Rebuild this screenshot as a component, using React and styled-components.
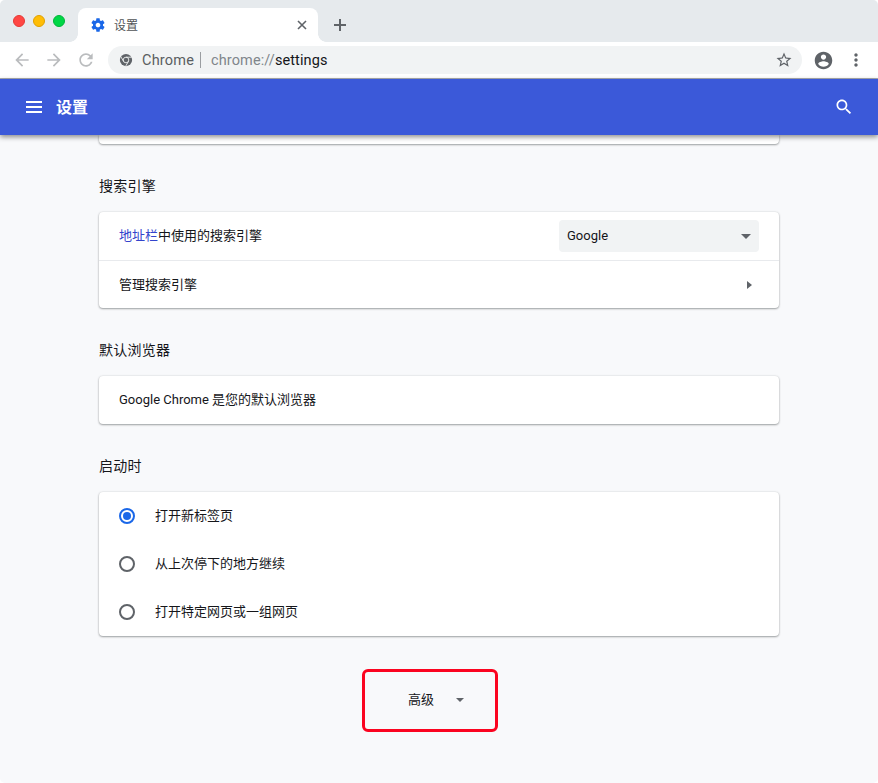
import React, { useState } from 'react';
import styled, { createGlobalStyle, css } from 'styled-components';

const GlobalStyle = createGlobalStyle`
  * {
    box-sizing: border-box;
  }
  body {
    margin: 0;
    background: #fff;
    font-family: Roboto, 'Noto Sans CJK SC', sans-serif;
    font-size: 13px;
    color: #15161a;
  }
`;

const Window = styled.div`
  display: flex;
  flex-direction: column;
  height: 783px;
  overflow: hidden;
  background: #f8f9fb;
  border-radius: 5px;
`;

const TabStrip = styled.div`
  display: flex;
  flex: none;
  height: 42px;
  background: #e6eaed;
`;

const TrafficLights = styled.div`
  display: flex;
  gap: 8px;
  width: 78px;
  padding: 15px 0 0 13px;
`;

const Light = styled.span`
  width: 12px;
  height: 12px;
  border-radius: 50%;
  background: ${(props) => props.$color};
  border: 1px solid ${(props) => props.$edge};
`;

const Tab = styled.div`
  position: relative;
  display: flex;
  align-items: center;
  width: 240px;
  margin-top: 8px;
  padding: 0 8px 0 12px;
  background: #fff;
  border-radius: 8px 8px 0 0;

  &::before,
  &::after {
    content: '';
    position: absolute;
    bottom: 0;
    width: 8px;
    height: 8px;
  }
  &::before {
    left: -8px;
    background: radial-gradient(circle at 0 0, transparent 7.5px, #fff 8px);
  }
  &::after {
    right: -8px;
    background: radial-gradient(circle at 100% 0, transparent 7.5px, #fff 8px);
  }
`;

const TabTitle = styled.span`
  flex: 1;
  margin-left: 8px;
  padding-top: 1px;
  font-size: 12px;
  line-height: 16px;
  color: #505356;
`;

const NewTab = styled.div`
  display: flex;
  align-items: center;
  margin: 8px 0 0 12px;
`;

const Toolbar = styled.div`
  display: flex;
  flex: none;
  align-items: center;
  height: 37px;
  padding-left: 12px;
  background: #fff;
  border-bottom: 1px solid #a9abb0;
`;

const NavButtons = styled.div`
  display: flex;
  gap: 12px;
  width: 96px;
`;

const Omnibox = styled.div`
  display: flex;
  flex: none;
  align-items: center;
  width: 694px;
  height: 28px;
  padding: 0 9px 0 11px;
  border-radius: 14px;
  background: #f1f3f4;
  font-size: 14.5px;
  line-height: 20px;
`;

const SiteName = styled.span`
  margin-left: 9px;
  padding: 1px 6px 0 0;
  color: #5a5e62;
  letter-spacing: 0.2px;
`;

const Divider = styled.span`
  width: 1px;
  height: 16px;
  background: #9a9da1;
`;

const Url = styled.span`
  flex: 1;
  margin-left: 10px;
  padding-top: 1px;
  color: #15161a;
  letter-spacing: 0.1px;
`;

const Scheme = styled.span`
  color: #80868b;
`;

const ToolbarActions = styled.div`
  display: flex;
  align-items: center;
  gap: 12px;
  margin-left: 11px;
`;

const Header = styled.header`
  position: relative;
  z-index: 1;
  display: flex;
  flex: none;
  align-items: center;
  height: 56px;
  padding: 0 24px 0 22px;
  background: #3b59d9;
  color: #fff;
  box-shadow: 0 2px 5px rgba(0, 0, 0, 0.45);
`;

const HeaderTitle = styled.h1`
  flex: 1;
  margin: 0 0 0 10px;
  padding-top: 1px;
  font-size: 16px;
  font-weight: 700;
  line-height: 24px;
`;

const Main = styled.main`
  width: 680px;
  margin: 0 auto;
`;

const Card = styled.div`
  background: #fff;
  border-radius: 4px;
  box-shadow: 0 1px 2px rgba(60, 64, 67, 0.45), 0 0 2px rgba(60, 64, 67, 0.18);
`;

const PreviousCard = styled(Card)`
  height: 9px;
  border-radius: 0 0 4px 4px;
`;

const SectionTitle = styled.h2`
  height: 68px;
  margin: 0;
  padding-top: 32px;
  font-size: 14px;
  font-weight: 400;
  line-height: 21px;
  letter-spacing: 0.25px;
`;

const Row = styled.div`
  display: flex;
  align-items: center;
  height: 48px;
  padding: 0 20px;

  ${(props) =>
    props.$divided &&
    css`
      border-top: 1px solid #e8eaed;
    `}
`;

const Label = styled.span`
  flex: 1;
  line-height: 20px;
`;

const Link = styled.span`
  color: #3344cc;
`;

const Select = styled.div`
  display: flex;
  align-items: center;
  justify-content: space-between;
  width: 200px;
  height: 32px;
  padding: 0 8px;
  border-radius: 4px;
  background: #f1f3f4;
`;

const SelectValue = styled.span`
  padding-bottom: 2px;
`;

const Triangle = styled.span`
  border: solid transparent;
  ${(props) =>
    props.$right
      ? css`
          margin-right: 7px;
          border-width: 4.5px 0 4.5px 5px;
          border-left-color: #5f6368;
        `
      : css`
          border-width: ${props.$size}px ${props.$size}px 0;
          border-top-color: #5f6368;
        `}
`;

const Radio = styled.span`
  display: flex;
  align-items: center;
  justify-content: center;
  width: 16px;
  height: 16px;
  margin-right: 20px;
  border: 2px solid ${(props) => (props.$checked ? '#1a67e8' : '#5f6368')};
  border-radius: 50%;

  &::after {
    content: '';
    width: 8px;
    height: 8px;
    border-radius: 50%;
    background: ${(props) => (props.$checked ? '#1a67e8' : 'transparent')};
  }
`;

const Advanced = styled.div`
  display: flex;
  align-items: center;
  gap: 22px;
  width: 136px;
  height: 63px;
  margin: 33px 0 0 263px;
  padding: 0 0 1px 43px;
  border: 3px solid #fb0420;
  border-radius: 6px;
  line-height: 20px;
`;

const ICONS = {
  settings:
    'M19.43 12.98c.04-.32.07-.64.07-.98s-.03-.66-.07-.98l2.11-1.65c.19-.15.24-.42.12-.64l-2-3.46c-.12-.22-.39-.3-.61-.22l-2.49 1c-.52-.4-1.08-.73-1.69-.98l-.38-2.65C14.46 2.18 14.25 2 14 2h-4c-.25 0-.46.18-.49.42l-.38 2.65c-.61.25-1.17.59-1.69.98l-2.49-1c-.23-.09-.49 0-.61.22l-2 3.46c-.13.22-.07.49.12.64l2.11 1.65c-.04.32-.07.65-.07.98s.03.66.07.98l-2.11 1.65c-.19.15-.24.42-.12.64l2 3.46c.12.22.39.3.61.22l2.49-1c.52.4 1.08.73 1.69.98l.38 2.65c.03.24.24.42.49.42h4c.25 0 .46-.18.49-.42l.38-2.65c.61-.25 1.17-.59 1.69-.98l2.49 1c.23.09.49 0 .61-.22l2-3.46c.12-.22.07-.49-.12-.64l-2.11-1.65zM12 15.5c-1.93 0-3.5-1.57-3.5-3.5s1.57-3.5 3.5-3.5 3.5 1.57 3.5 3.5-1.57 3.5-3.5 3.5z',
  back: 'M20 11H7.83l5.59-5.59L12 4l-8 8 8 8 1.41-1.41L7.83 13H20v-2z',
  forward: 'M12 4l-1.41 1.41L16.17 11H4v2h12.17l-5.58 5.59L12 20l8-8z',
  reload:
    'M17.65 6.35C16.2 4.9 14.21 4 12 4c-4.42 0-7.99 3.58-7.99 8s3.57 8 7.99 8c3.73 0 6.84-2.55 7.73-6h-2.08c-.82 2.33-3.04 4-5.65 4-3.31 0-6-2.69-6-6s2.69-6 6-6c1.66 0 3.14.69 4.22 1.78L13 11h7V4l-2.35 2.35z',
  star:
    'M22 9.24l-7.19-.62L12 2 9.19 8.63 2 9.24l5.46 4.73L5.82 21 12 17.27 18.18 21l-1.63-7.03L22 9.24zM12 15.4l-3.76 2.27 1-4.28-3.32-2.88 4.38-.38L12 6.1l1.71 4.04 4.38.38-3.32 2.88 1 4.28L12 15.4z',
  account:
    'M12 2C6.48 2 2 6.48 2 12s4.48 10 10 10 10-4.48 10-10S17.52 2 12 2zm0 3c1.66 0 3 1.34 3 3s-1.34 3-3 3-3-1.34-3-3 1.34-3 3-3zm0 14.2c-2.5 0-4.71-1.28-6-3.22.03-1.99 4-3.08 6-3.08 1.99 0 5.97 1.09 6 3.08-1.29 1.94-3.5 3.22-6 3.22z',
  more:
    'M12 8c1.1 0 2-.9 2-2s-.9-2-2-2-2 .9-2 2 .9 2 2 2zm0 2c-1.1 0-2 .9-2 2s.9 2 2 2 2-.9 2-2-.9-2-2-2zm0 6c-1.1 0-2 .9-2 2s.9 2 2 2 2-.9 2-2-.9-2-2-2z',
  menu: 'M4 18h16v-2H4v2zm0-5h16v-2H4v2zm0-7v2h16V6H4z',
  search:
    'M15.5 14h-.79l-.28-.27C15.41 12.59 16 11.11 16 9.5 16 5.91 13.09 3 9.5 3S3 5.91 3 9.5 5.91 16 9.5 16c1.61 0 3.09-.59 4.23-1.57l.27.28v.79l5 4.99L20.49 19l-4.99-5zm-6 0C7.01 14 5 11.99 5 9.5S7.01 5 9.5 5 14 7.01 14 9.5 11.99 14 9.5 14z',
};

const Icon = ({ name, size, color = '#5f6368' }) => (
  <svg width={size} height={size} viewBox="0 0 24 24" fill={color}>
    <path d={ICONS[name]} />
  </svg>
);

const CloseIcon = () => (
  <svg width="16" height="16" fill="none" stroke="#5f6368" strokeWidth="1.6">
    <path d="M4 4l8 8M12 4l-8 8" />
  </svg>
);

const PlusIcon = () => (
  <svg width="20" height="20" fill="none" stroke="#5f6368" strokeWidth="2">
    <path d="M4 10h12M10 4v12" />
  </svg>
);

const ChromeIcon = () => (
  <svg width="14" height="14" viewBox="0 0 24 24">
    <circle cx="12" cy="12" r="10.5" fill="#5f6368" />
    <g fill="none" stroke="#f1f3f4" strokeWidth="1.5">
      <circle cx="12" cy="12" r="4.8" />
      <path d="M12 7.2h10M7.84 14.4l-5-8.66M16.16 14.4l-5 8.66" />
    </g>
  </svg>
);

const startupOptions = ['打开新标签页', '从上次停下的地方继续', '打开特定网页或一组网页'];

const Browser = () => (
  <>
    <TabStrip>
      <TrafficLights>
        <Light $color="#ff4744" $edge="#e53935" />
        <Light $color="#ffbd06" $edge="#e0a000" />
        <Light $color="#00d746" $edge="#00b53a" />
      </TrafficLights>
      <Tab>
        <Icon name="settings" size={16} color="#1a67e8" />
        <TabTitle>设置</TabTitle>
        <CloseIcon />
      </Tab>
      <NewTab>
        <PlusIcon />
      </NewTab>
    </TabStrip>
    <Toolbar>
      <NavButtons>
        <Icon name="back" size={20} color="#babcbe" />
        <Icon name="forward" size={20} color="#babcbe" />
        <Icon name="reload" size={20} color="#babcbe" />
      </NavButtons>
      <Omnibox>
        <ChromeIcon />
        <SiteName>Chrome</SiteName>
        <Divider />
        <Url>
          <Scheme>chrome://</Scheme>settings
        </Url>
        <Icon name="star" size={18} />
      </Omnibox>
      <ToolbarActions>
        <Icon name="account" size={21} />
        <Icon name="more" size={20} />
      </ToolbarActions>
    </Toolbar>
  </>
);

const App = () => {
  const [startup, setStartup] = useState(0);

  return (
    <Window>
      <GlobalStyle />
      <Browser />
      <Header>
        <Icon name="menu" size={24} color="#fff" />
        <HeaderTitle>设置</HeaderTitle>
        <Icon name="search" size={20} color="#fff" />
      </Header>
      <Main>
        <PreviousCard />
        <SectionTitle>搜索引擎</SectionTitle>
        <Card>
          <Row>
            <Label>
              <Link>地址栏</Link>中使用的搜索引擎
            </Label>
            <Select>
              <SelectValue>Google</SelectValue>
              <Triangle $size={5} />
            </Select>
          </Row>
          <Row $divided>
            <Label>管理搜索引擎</Label>
            <Triangle $right />
          </Row>
        </Card>
        <SectionTitle>默认浏览器</SectionTitle>
        <Card>
          <Row>
            <Label>Google Chrome 是您的默认浏览器</Label>
          </Row>
        </Card>
        <SectionTitle>启动时</SectionTitle>
        <Card>
          {startupOptions.map((option, index) => (
            <Row key={option} onClick={() => setStartup(index)}>
              <Radio $checked={startup === index} />
              <Label>{option}</Label>
            </Row>
          ))}
        </Card>
        <Advanced>
          高级
          <Triangle $size={4} />
        </Advanced>
      </Main>
    </Window>
  );
};

export default App;
